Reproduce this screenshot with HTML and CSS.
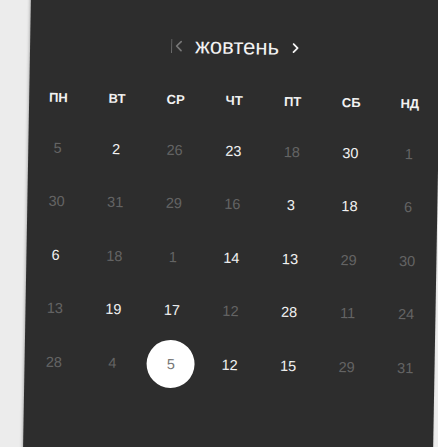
FILE: index.html
```html
<!DOCTYPE html>
<html lang="uk">
<head>
<meta charset="utf-8">
<title>Календар</title>
<link rel="stylesheet" href="styles.css">
</head>
<body>
<div class="calendar">
  <div class="nav">
    <button class="nav-btn prev" aria-label="Попередній місяць">
      <svg width="11" height="16" viewBox="0 0 11 16"><line x1="0.5" y1="1" x2="0.5" y2="15" stroke="#6a6a6a" stroke-width="1"/><polyline points="10,3.5 5.5,8 10,12.5" fill="none" stroke="#777" stroke-width="1.7" stroke-linecap="round" stroke-linejoin="round"/></svg>
    </button>
    <div class="month">жовтень</div>
    <button class="nav-btn next" aria-label="Наступний місяць">
      <svg width="7" height="10" viewBox="0 0 7 10"><polyline points="1.5,1 5.5,5 1.5,9" fill="none" stroke="#f2f2f2" stroke-width="1.8" stroke-linecap="round" stroke-linejoin="round"/></svg>
    </button>
  </div>
  <div class="weekdays">
    <div>ПН</div><div>ВТ</div><div>СР</div><div>ЧТ</div><div>ПТ</div><div>СБ</div><div>НД</div>
  </div>
  <div class="days">
    <div class="day dim">5</div><div class="day">2</div><div class="day dim">26</div><div class="day">23</div><div class="day dim">18</div><div class="day">30</div><div class="day dim">1</div>
    <div class="day dim">30</div><div class="day dim">31</div><div class="day dim">29</div><div class="day dim">16</div><div class="day">3</div><div class="day">18</div><div class="day dim">6</div>
    <div class="day">6</div><div class="day dim">18</div><div class="day dim">1</div><div class="day">14</div><div class="day">13</div><div class="day dim">29</div><div class="day dim">30</div>
    <div class="day dim">13</div><div class="day">19</div><div class="day">17</div><div class="day dim">12</div><div class="day">28</div><div class="day dim">11</div><div class="day dim">24</div>
    <div class="day dim">28</div><div class="day dim">4</div><div class="day selected"><span>5</span></div><div class="day">12</div><div class="day">15</div><div class="day dim">29</div><div class="day dim">31</div>
  </div>
</div>
</body>
</html>
```
FILE: styles.css
```css
html, body {
  margin: 0;
  padding: 0;
  overflow: hidden;
  background: #ececec;
  height: 100%;
}
body {
  font-family: "Liberation Sans", Arial, sans-serif;
}
.calendar {
  box-sizing: border-box;
  width: 410px;
  height: 470px;
  margin: -10px 0 0 27px;
  padding-top: 37px;
  background: #2d2d2d;
  color: #f2f2f2;
  transform: rotate(1deg);
  box-shadow: -1px 0 3px rgba(0, 0, 0, 0.25);
}
.nav {
  height: 40px;
  display: flex;
  align-items: center;
  justify-content: center;
  gap: 13px;
}
.nav-btn {
  background: none;
  border: 0;
  padding: 0;
  display: flex;
  align-items: center;
  cursor: pointer;
}
.month {
  font-size: 22px;
  line-height: 24px;
  color: #f2f2f2;
}
.weekdays {
  margin-top: 9px;
  height: 48px;
  display: grid;
  grid-template-columns: repeat(7, 1fr);
  align-items: center;
  justify-items: center;
  font-size: 13px;
  font-weight: bold;
  color: #f2f2f2;
}
.days {
  display: grid;
  grid-template-columns: repeat(7, 1fr);
  grid-auto-rows: 53.5px;
  align-items: center;
  justify-items: center;
  font-size: 14.5px;
}
.day {
  color: #f2f2f2;
}
.day.dim {
  color: #646464;
}
.day.selected {
  width: 48px;
  height: 48px;
  border-radius: 50%;
  background: #ffffff;
  color: #777777;
  display: flex;
  align-items: center;
  justify-content: center;
}
```
